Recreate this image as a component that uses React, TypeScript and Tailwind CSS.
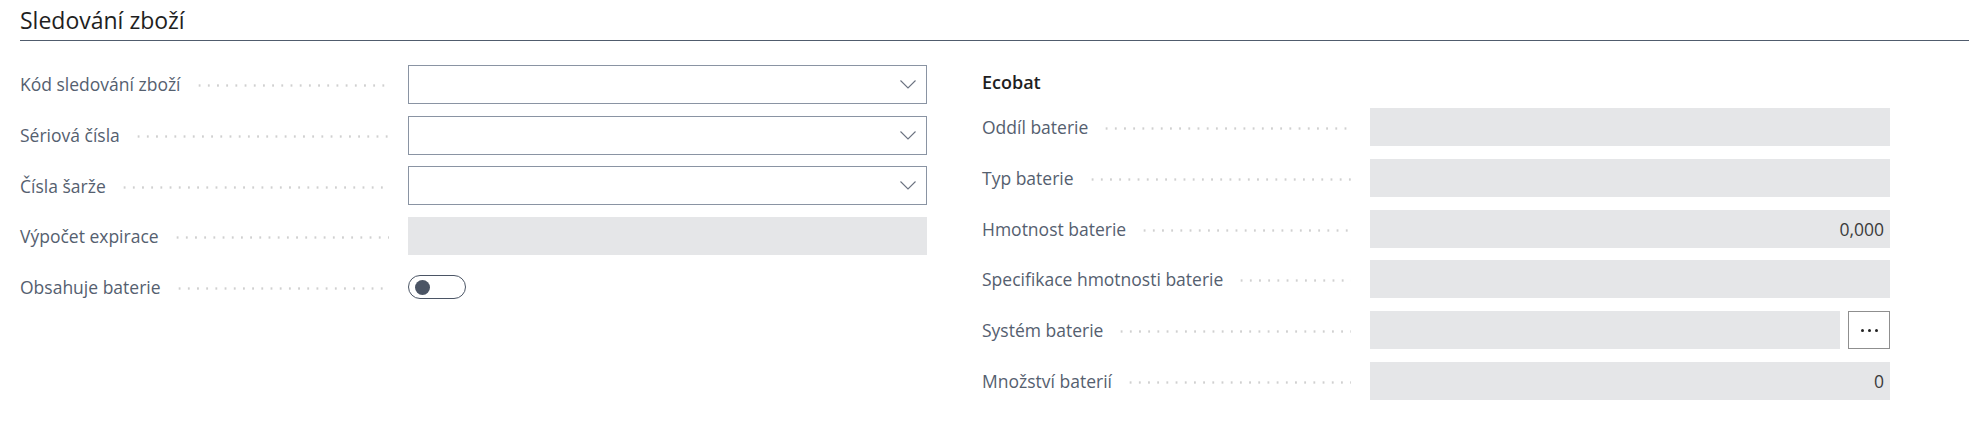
import React from 'react';

type Field = {
  label: string;
  kind: 'select' | 'readonly' | 'toggle' | 'lookup';
  value?: string;
};

const leftFields: Field[] = [
  { label: 'Kód sledování zboží', kind: 'select' },
  { label: 'Sériová čísla', kind: 'select' },
  { label: 'Čísla šarže', kind: 'select' },
  { label: 'Výpočet expirace', kind: 'readonly' },
  { label: 'Obsahuje baterie', kind: 'toggle' },
];

const rightFields: Field[] = [
  { label: 'Oddíl baterie', kind: 'readonly' },
  { label: 'Typ baterie', kind: 'readonly' },
  { label: 'Hmotnost baterie', kind: 'readonly', value: '0,000' },
  { label: 'Specifikace hmotnosti baterie', kind: 'readonly' },
  { label: 'Systém baterie', kind: 'lookup' },
  { label: 'Množství baterií', kind: 'readonly', value: '0' },
];

function Chevron() {
  return (
    <svg width="16" height="9" viewBox="0 0 16 9" fill="none" className="text-[#6b7280]">
      <path d="M0.5 0.5 L8 8 L15.5 0.5" stroke="currentColor" strokeWidth="1.1" />
    </svg>
  );
}

function Control({ field }: { field: Field }) {
  if (field.kind === 'select') {
    return (
      <div className="flex-1 h-[39px] border border-[#8a94a3] bg-white flex items-center justify-end pr-[10px]">
        <Chevron />
      </div>
    );
  }
  if (field.kind === 'toggle') {
    return (
      <div className="flex-1 flex items-center">
        <div className="w-[58px] h-[24px] rounded-full border border-[#4b5565] flex items-center pl-[6px]">
          <div className="w-[15px] h-[15px] rounded-full bg-[#4b5565]" />
        </div>
      </div>
    );
  }
  if (field.kind === 'lookup') {
    return (
      <div className="flex-1 flex items-center gap-[8px]">
        <div className="flex-1 h-[38px] bg-[#e5e6e8]" />
        <div className="w-[42px] h-[38px] border border-[#8f8f8f] bg-white flex items-center justify-center gap-[4px]">
          <span className="w-[3px] h-[3px] rounded-full bg-[#222]" />
          <span className="w-[3px] h-[3px] rounded-full bg-[#222]" />
          <span className="w-[3px] h-[3px] rounded-full bg-[#222]" />
        </div>
      </div>
    );
  }
  return (
    <div className="flex-1 h-[38px] bg-[#e5e6e8] flex items-center justify-end pr-[6px] text-[17.5px] text-[#3b3b3b]">
      {field.value}
    </div>
  );
}

function Row({ field }: { field: Field }) {
  return (
    <div className="flex items-center h-[50.7px]">
      <div className="w-[388px] shrink-0 flex items-center pr-[19px]">
        <span className="text-[17.5px] text-[#55606f] whitespace-nowrap">{field.label}</span>
        <div className="flex-1 ml-[14px] mt-[3px] h-[3px] bg-[radial-gradient(circle,#d0d0d0_1px,transparent_1.3px)] bg-[length:9.2px_3px] bg-repeat-x" />
      </div>
      <Control field={field} />
    </div>
  );
}

export default function App() {
  return (
    <div className="w-[1969px] h-[433px] bg-white font-['Open_Sans',sans-serif] overflow-hidden">
      {/* Section Header */}
      <div className="ml-[20px] h-[41px] border-b border-[#505c6d] flex items-center">
        <h2 className="text-[23px] text-[#1f1f1f] leading-none">Sledování zboží</h2>
      </div>

      <div className="flex pt-[18px]">
        {/* Left group */}
        <div className="ml-[20px] w-[907px]">
          {leftFields.map((f) => (
            <Row key={f.label} field={f} />
          ))}
        </div>

        {/* Ecobat group */}
        <div className="ml-[55px] w-[908px]">
          <div className="h-[43px] flex items-end pb-[6px]">
            <span className="text-[18px] font-semibold text-[#1f1f1f]">Ecobat</span>
          </div>
          {rightFields.map((f) => (
            <Row key={f.label} field={f} />
          ))}
        </div>
      </div>
    </div>
  );
}
